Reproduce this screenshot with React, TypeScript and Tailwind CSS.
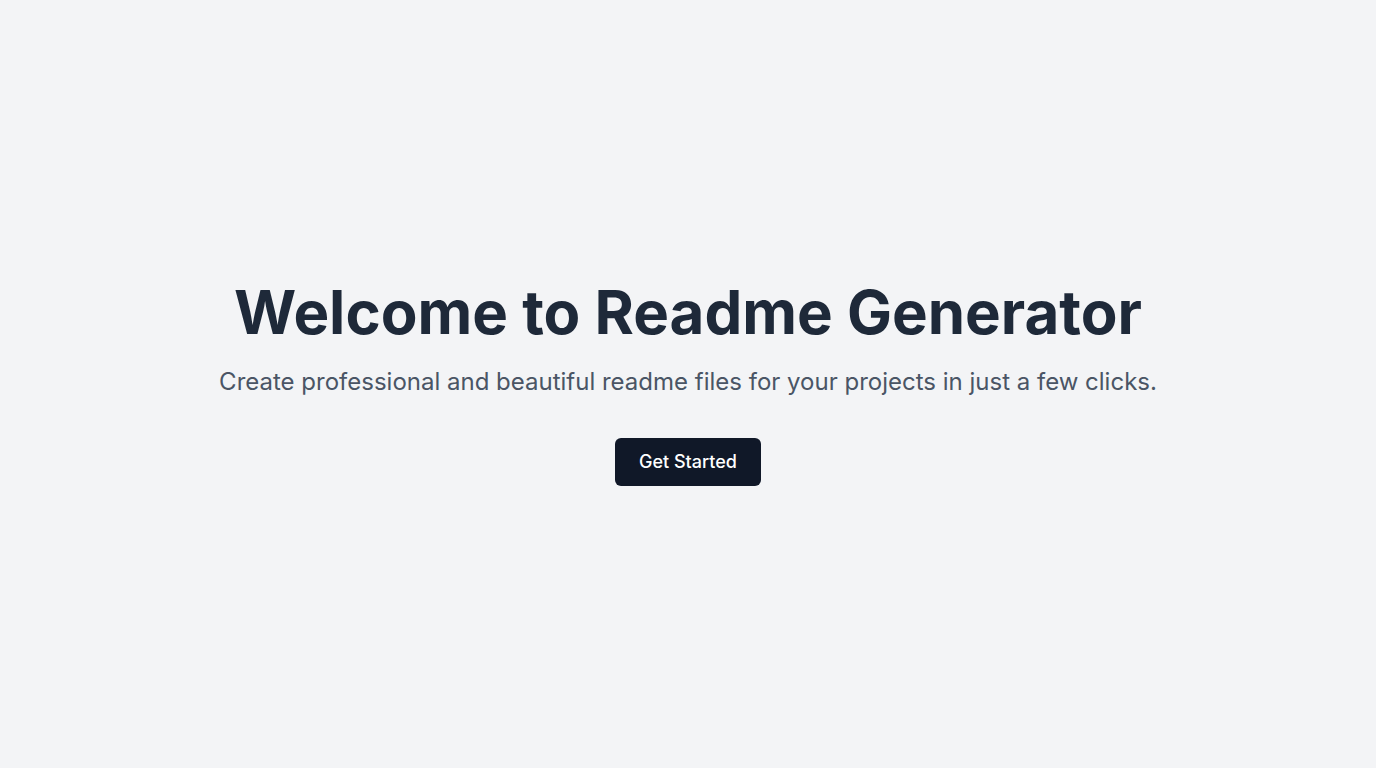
export default function App() {
  return (
    <div
      className="min-h-screen bg-gray-100 flex flex-col items-center justify-center text-center"
      style={{ fontFamily: "Inter, 'Noto Sans', sans-serif" }}
    >
      <h1 className="text-6xl font-bold text-gray-800 mb-6">Welcome to Readme Generator</h1>
      <p className="text-2xl text-gray-600 mb-10">
        Create professional and beautiful readme files for your projects in just a few clicks.
      </p>
      <button className="bg-gray-900 text-white px-6 py-2.5 rounded-md text-lg font-medium">
        Get Started
      </button>
    </div>
  );
}
